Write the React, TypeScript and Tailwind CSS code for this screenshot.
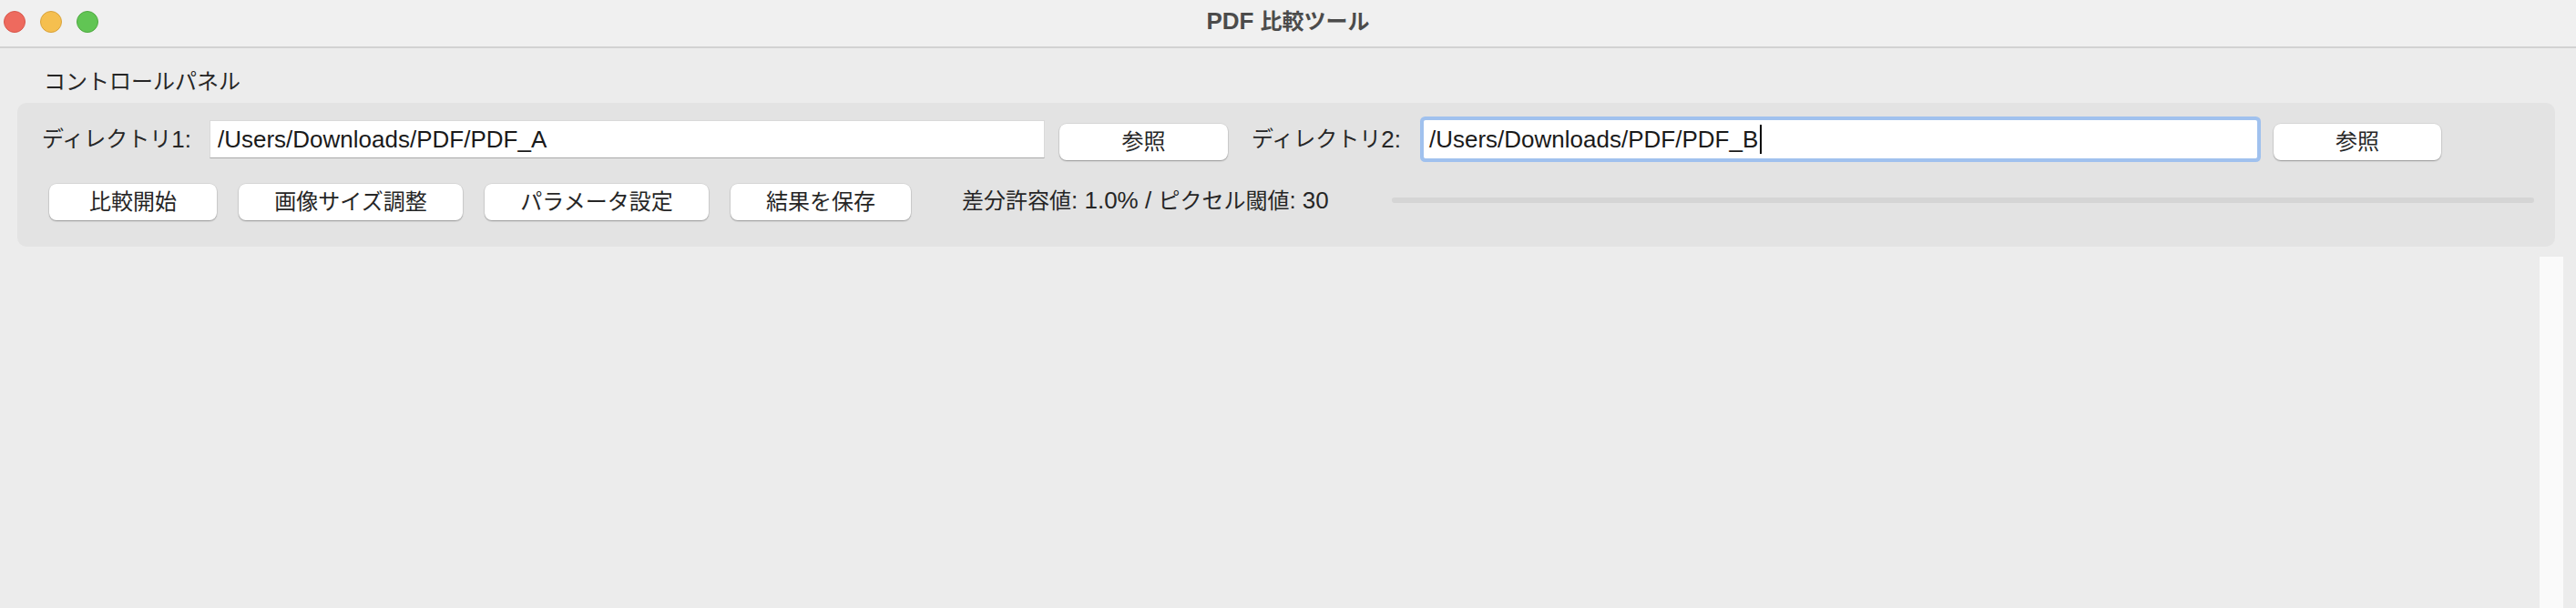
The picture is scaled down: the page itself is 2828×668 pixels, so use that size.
export default function App() {
  const btn =
    "h-[40px] shrink-0 flex items-center justify-center rounded-[8px] bg-white whitespace-nowrap shadow-[0_1px_1.5px_rgba(0,0,0,0.3),0_0_0_0.5px_rgba(0,0,0,0.1)]";
  return (
    <div className="w-[2828px] h-[668px] overflow-hidden bg-[#ececec] text-[#262626] flex flex-col [font-family:'Liberation_Sans','Noto_Sans_CJK_JP',sans-serif] text-[24px] leading-[30px]">
      {/* Title bar */}
      <div className="h-[53px] shrink-0 bg-[#f0f0f0] border-b-2 border-[#d2d2d2] grid grid-cols-[1fr_auto_1fr]">
        <div className="flex items-start gap-[16px] pl-[4px] pt-[12px]">
          <span className="w-[24px] h-[24px] rounded-full bg-[#ee6a5e] border border-[#d8574c]" />
          <span className="w-[24px] h-[24px] rounded-full bg-[#f5bf4f] border border-[#d9a33c]" />
          <span className="w-[24px] h-[24px] rounded-full bg-[#61c554] border border-[#4fa941]" />
        </div>
        <div className="pt-[8px] font-bold text-[#4b4b4b] whitespace-nowrap">
          <span className="text-[26px]">PDF </span>比較ツール
        </div>
        <div />
      </div>

      {/* Body */}
      <div className="flex-1 flex flex-col pl-[19px] pt-[22px]">
        <div className="pl-[29px] whitespace-nowrap">コントロールパネル</div>

        <div className="mt-[8px] w-[2786px] h-[158px] shrink-0 rounded-[10px] bg-[#e3e3e3] pl-[27px] pt-[19px] flex flex-col">
          {/* Row 1 */}
          <div className="flex items-start">
            <div className="w-[184px] h-[42px] flex items-center whitespace-nowrap">
              ディレクトリ<span className="text-[26px]">1:</span>
            </div>
            <div className="w-[917px] h-[42px] bg-white border border-[#d9d9d9] border-b-[#a9a9a9] flex items-center pl-[8px] text-[26px] text-[#1a1a1a] whitespace-nowrap">
              /Users/Downloads/PDF/PDF_A
            </div>
            <div className={`${btn} ml-[16px] mt-[4px] w-[185px]`}>参照</div>
            <div className="ml-[26px] w-[189px] h-[42px] flex items-center whitespace-nowrap">
              ディレクトリ<span className="text-[26px]">2:</span>
            </div>
            <div className="w-[915px] h-[42px] bg-white rounded-[2px] ring-4 ring-[#a0c1ee] flex items-center pl-[6px] text-[26px] text-[#1a1a1a] whitespace-nowrap">
              /Users/Downloads/PDF/PDF_B
              <span className="ml-[2px] w-[2px] h-[32px] bg-black" />
            </div>
            <div className={`${btn} ml-[18px] mt-[4px] w-[184px]`}>参照</div>
          </div>

          {/* Row 2 */}
          <div className="mt-[26px] flex items-start pl-[8px]">
            <div className={`${btn} w-[184px]`}>比較開始</div>
            <div className={`${btn} ml-[24px] w-[246px]`}>画像サイズ調整</div>
            <div className={`${btn} ml-[24px] w-[246px]`}>パラメータ設定</div>
            <div className={`${btn} ml-[24px] w-[198px]`}>結果を保存</div>
            <div className="ml-[56px] w-[472px] shrink-0 leading-[36px] whitespace-nowrap">
              差分許容値<span className="text-[26px]">: 1.0% / </span>ピクセル閾値
              <span className="text-[26px]">: 30</span>
            </div>
            <div className="mt-[15px] w-[1254px] h-[6px] rounded-full bg-[#d5d5d5]" />
          </div>
        </div>

        {/* Canvas + scrollbar */}
        <div className="mt-[11px] flex-1 flex pr-[14px]">
          <div className="flex-1" />
          <div className="w-[26px] bg-[#fafafa]" />
        </div>
      </div>
    </div>
  );
}
